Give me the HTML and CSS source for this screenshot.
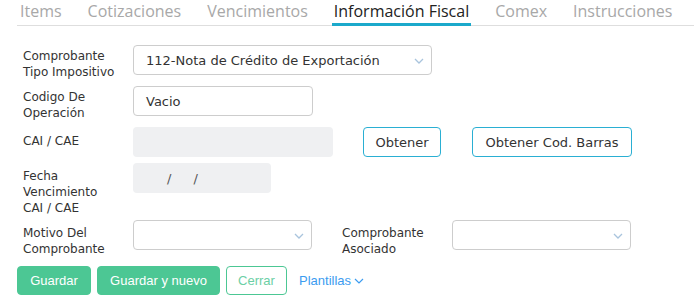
FILE: index.html
```html
<!DOCTYPE html>
<html lang="es">
<head>
<meta charset="utf-8">
<link rel="stylesheet" href="styles.css">
</head>
<body>
<nav class="tabs">
  <span class="tab">Items</span>
  <span class="tab">Cotizaciones</span>
  <span class="tab">Vencimientos</span>
  <span class="tab active">Información Fiscal</span>
  <span class="tab">Comex</span>
  <span class="tab">Instrucciones</span>
</nav>
<form class="form">
  <div class="row r1">
    <label class="lbl">Comprobante<br>Tipo Impositivo</label>
    <div class="ctl select w300"><span class="val">112-Nota de Crédito de Exportación</span>
      <svg class="chev" width="10" height="6" viewBox="0 0 10 6"><path d="M1 1l4 4 4-4" fill="none" stroke="#a9c4dd" stroke-width="1.3"/></svg></div>
  </div>
  <div class="row r2">
    <label class="lbl">Codigo De<br>Operación</label>
    <div class="ctl input w180"><span class="val">Vacio</span></div>
  </div>
  <div class="row r3">
    <label class="lbl">CAI / CAE</label>
    <div class="ctl gray w200"></div>
    <button type="button" class="obt b1">Obtener</button>
    <button type="button" class="obt b2">Obtener Cod. Barras</button>
  </div>
  <div class="row r4">
    <label class="lbl">Fecha<br>Vencimiento<br>CAI / CAE</label>
    <div class="ctl gray w138"><span class="date">/<span class="sl2">/</span></span></div>
  </div>
  <div class="row r5">
    <label class="lbl">Motivo Del<br>Comprobante</label>
    <div class="ctl select w179"><svg class="chev" width="10" height="6" viewBox="0 0 10 6"><path d="M1 1l4 4 4-4" fill="none" stroke="#a9c4dd" stroke-width="1.3"/></svg></div>
    <label class="lbl lbl2">Comprobante<br>Asociado</label>
    <div class="ctl select w179"><svg class="chev" width="10" height="6" viewBox="0 0 10 6"><path d="M1 1l4 4 4-4" fill="none" stroke="#a9c4dd" stroke-width="1.3"/></svg></div>
  </div>
  <div class="actions">
    <button type="button" class="btn green g1">Guardar</button>
    <button type="button" class="btn green g2">Guardar y nuevo</button>
    <button type="button" class="btn outline">Cerrar</button>
    <span class="link">Plantillas<svg width="10" height="6" viewBox="0 0 10 6"><path d="M1 1l4 4 4-4" fill="none" stroke="#3c9cf0" stroke-width="1.2"/></svg></span>
  </div>
</form>
</body>
</html>
```
FILE: styles.css
```css
* { box-sizing: border-box; }
body { margin: 0; background: #fff; font-family: "DejaVu Sans", Verdana, sans-serif; color: #333; }
.tabs {
  display: flex; gap: 22px; margin-left: 17px; padding-left: 1px;
  border-bottom: 1px solid #dedede;
  font-family: "Open Sans", sans-serif; font-size: 16px;
}
.tab {
  padding: 0 2px; line-height: 23px; height: 26px;
  border-bottom: 3px solid transparent; margin-bottom: -1px;
  color: #a8a8a8; white-space: nowrap;
}
.tab.active { color: #222; border-bottom-color: #1ba9cb; }
.form { padding-left: 17px; padding-top: 19px; }
.row { display: flex; align-items: flex-start; }
.lbl { width: 116px; padding-left: 6px; padding-top: 4px; font-size: 12px; line-height: 16px; color: #333; flex: none; }
.lbl2 { width: 110px; padding-left: 0; margin-left: 30px; }
.r1 { margin-bottom: 6px; }
.r1 .lbl, .r2 .lbl { padding-top: 3px; }
.r2 { margin-bottom: 6px; }
.r3 { margin-bottom: 6px; }
.r3 .lbl { padding-top: 6px; }
.r4 { margin-bottom: 4px; }
.r4 .lbl { padding-top: 5px; }
.r5 { margin-bottom: 9px; }
.r5 .lbl { padding-top: 5px; }
.ctl { height: 30px; border-radius: 4px; flex: none; display: flex; align-items: center; position: relative; font-size: 13px; color: #333; }
.select, .input { border: 1px solid #cdcdcd; background: #fff; padding-left: 12px; }
.gray { background: #eff0f2; }
.w300 { width: 299px; }
.w180 { width: 180px; }
.w200 { width: 200px; }
.w138 { width: 138px; }
.w179 { width: 179px; }
.chev { position: absolute; right: 7px; top: 12px; }
.date { padding-left: 34px; font-size: 13px; color: #555; }
.sl2 { padding-left: 22px; }
.obt {
  height: 30px; border: 1px solid #2aafd3; border-radius: 4px; background: #fff;
  font-family: "DejaVu Sans", Verdana, sans-serif; font-size: 13px; color: #333;
  padding: 0; flex: none;
}
.b1 { width: 78px; margin-left: 30px; }
.b2 { width: 160px; margin-left: 31px; }
.actions { display: flex; align-items: center; gap: 6px; }
.btn {
  height: 29px; border-radius: 4px; font-family: "Liberation Sans", Arial, sans-serif;
  font-size: 13px; padding: 0; flex: none;
}
.green { background: #4cc794; border: 1px solid #4cc794; color: #fff; }
.g1 { width: 74px; }
.g2 { width: 123px; }
.outline { width: 61px; background: #fff; border: 1px solid #4cc794; color: #6ccfa5; }
.link {
  margin-left: 6px; font-family: "Liberation Sans", Arial, sans-serif; font-size: 13px;
  color: #3c9cf0; display: flex; align-items: center; gap: 3px;
}
```
